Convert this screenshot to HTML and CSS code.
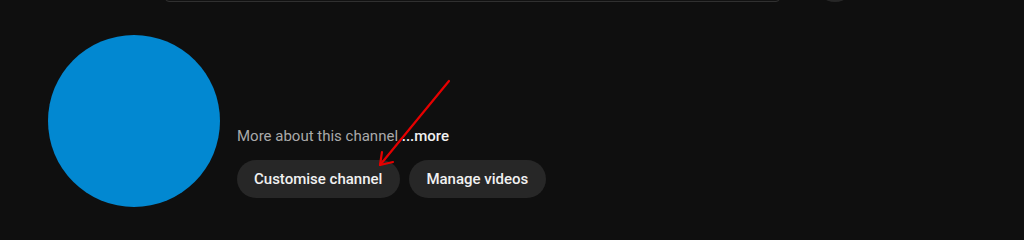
FILE: index.html
```html
<!DOCTYPE html>
<html>
<head>
<meta charset="utf-8">
<link rel="stylesheet" href="styles.css">
</head>
<body>
<div class="page">
  <header class="masthead">
    <div class="search"></div>
    <div class="mic"></div>
  </header>
  <section class="channel">
    <div class="avatar"></div>
    <div class="info">
      <p class="about">More about this channel <span class="more">...more</span></p>
      <div class="actions">
        <button class="btn">Customise channel</button>
        <button class="btn">Manage videos</button>
      </div>
    </div>
  </section>
  <svg class="annot" width="1024" height="225" viewBox="0 0 1024 225">
    <g stroke="#e60000" stroke-width="2.2" stroke-linecap="round" fill="none">
      <line x1="449" y1="81" x2="380" y2="165"/>
      <line x1="380" y1="165" x2="393" y2="162"/>
      <line x1="380" y1="165" x2="382" y2="152"/>
    </g>
  </svg>
</div>
</body>
</html>
```
FILE: styles.css
```css
html, body {
  margin: 0;
  padding: 0;
  background: #0f0f0f;
}
.page {
  position: relative;
  width: 1024px;
  height: 225px;
  overflow: hidden;
  font-family: Roboto, "Liberation Sans", Arial, sans-serif;
  color: #f1f1f1;
}
.masthead {
  height: 2px;
  overflow: hidden;
  display: flex;
  align-items: flex-end;
  padding-left: 165px;
}
.search {
  flex: none;
  width: 613px;
  height: 40px;
  border: 1px solid #303030;
  border-radius: 0 0 4px 4px;
  background: #121212;
}
.mic {
  flex: none;
  width: 40px;
  height: 40px;
  margin-left: 35px;
  border-radius: 50%;
  background: #272727;
}
.channel {
  display: flex;
  margin-top: 33px;
  padding-left: 48px;
}
.avatar {
  flex: none;
  width: 172px;
  height: 172px;
  border-radius: 50%;
  background: #0288d1;
}
.info {
  margin-left: 17px;
  padding-top: 91px;
}
.about {
  margin: 0;
  font-size: 15px;
  line-height: 20px;
  color: #aaaaaa;
}
.more {
  color: #f1f1f1;
  font-weight: 500;
}
.actions {
  display: flex;
  gap: 9px;
  margin-top: 14px;
}
.btn {
  height: 38px;
  padding: 0 18px 0 17px;
  border: none;
  border-radius: 19px;
  background: #272727;
  color: #f1f1f1;
  font-family: Roboto, "Liberation Sans", Arial, sans-serif;
  font-size: 15px;
  font-weight: 500;
  line-height: 38px;
}
.annot {
  position: absolute;
  left: 0;
  top: 0;
}
```
